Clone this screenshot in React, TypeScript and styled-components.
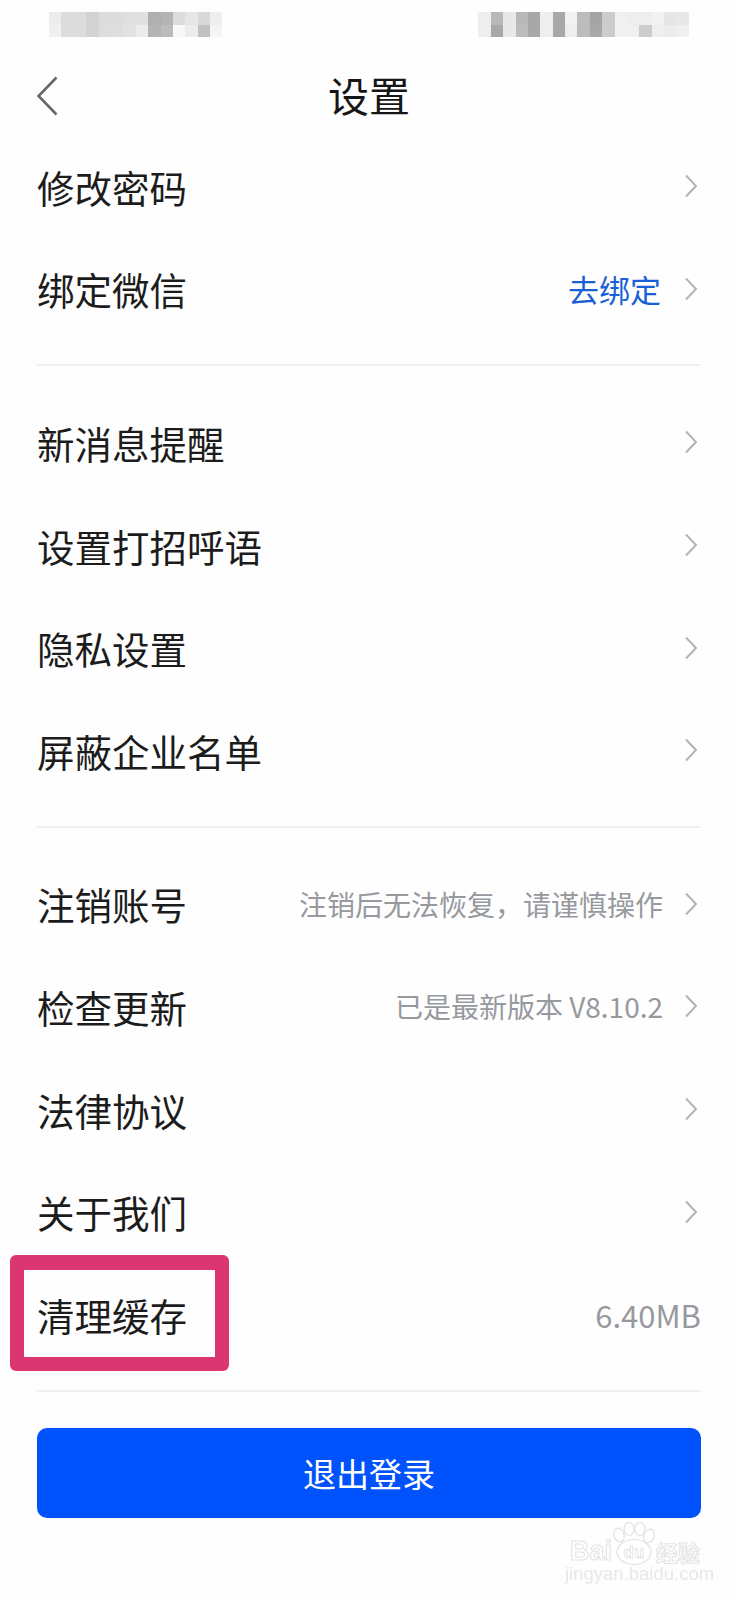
import React from "react";
import styled, { createGlobalStyle } from "styled-components";

const GlobalStyle = createGlobalStyle`
  html, body {
    margin: 0;
    padding: 0;
    background: #fff;
  }
  body {
    font-family: "Noto Sans CJK SC", "Noto Sans", sans-serif;
  }
`;

const Page = styled.div`
  position: relative;
  width: 738px;
  height: 1600px;
  background: #fefefe;
  overflow: hidden;
`;

const StatusBar = styled.div`
  display: flex;
  justify-content: space-between;
  align-items: flex-start;
  height: 44px;
  padding: 12px 49px 0;
`;

const Mosaic = styled.div<{ $cols: number }>`
  display: grid;
  grid-template-columns: repeat(${(p) => p.$cols}, 12.4px);
  grid-auto-rows: 12.5px;
  filter: blur(0.5px);
`;

const MosaicCell = styled.span<{ $shade: string }>`
  background: ${(p) => p.$shade};
`;

const NavBar = styled.header`
  display: grid;
  grid-template-columns: 1fr auto 1fr;
  align-items: center;
  height: 82px;
  padding: 0 37px;
`;

const BackIcon = styled.svg`
  display: block;
  width: 22px;
  height: 40px;
  margin-top: -2px;
`;

const Title = styled.h1`
  margin: 0;
  padding-bottom: 6px;
  font-size: 41px;
  line-height: 76px;
  font-weight: 400;
  color: #161616;
`;

const List = styled.main`
  padding: 0 37px;
`;

const Row = styled.div`
  position: relative;
  box-sizing: border-box;
  display: flex;
  justify-content: space-between;
  align-items: center;
  height: 102.6px;
  padding-bottom: 6px;
`;

const Label = styled.span`
  font-size: 37.5px;
  color: #1c1c1c;
`;

const Right = styled.div`
  display: flex;
  align-items: center;
`;

const Hint = styled.span<{ $tone?: "blue" | "gray"; $size?: number }>`
  font-size: ${(p) => p.$size ?? 28}px;
  color: ${(p) => (p.$tone === "blue" ? "#1a5fd6" : "#96999e")};
  margin-right: ${(p) => (p.$tone === "blue" ? 2 : 0)}px;
`;

const ChevronIcon = styled.svg`
  display: block;
  width: 14px;
  height: 24px;
  margin: 0 3px 0 21px;
`;

const Divider = styled.hr<{ $after?: number }>`
  height: 2px;
  margin: 21px 0 ${(p) => p.$after ?? 28}px;
  border: 0;
  background: #f0f0f0;
`;

const Highlight = styled.div`
  position: absolute;
  top: -11px;
  left: -27px;
  width: 191px;
  height: 87px;
  border: solid #dc3672;
  border-width: 15px 14px 14px;
  border-radius: 6px;
`;

const LogoutButton = styled.button`
  display: block;
  width: 100%;
  height: 90px;
  padding: 0;
  border: 0;
  border-radius: 10px;
  background: #0052fc;
  color: #fff;
  font-family: inherit;
  font-size: 33px;
`;

const Watermark = styled.div`
  position: absolute;
  left: 570px;
  top: 1525px;
  width: 140px;
  color: #e8e8e8;
  font-family: "Liberation Sans", sans-serif;
  filter: blur(0.4px);
`;

const WatermarkTop = styled.div`
  display: flex;
  align-items: flex-end;
  height: 40px;
`;

const WatermarkWord = styled.span`
  flex: none;
  font-size: 27px;
  line-height: 28px;
  font-weight: 700;
  color: #fff;
  -webkit-text-stroke: 1px #e2e2e2;
`;

const WatermarkCn = styled.span`
  flex: none;
  font-family: "Noto Sans CJK SC", sans-serif;
  font-size: 22px;
  line-height: 28px;
  font-weight: 700;
  white-space: nowrap;
  color: #fff;
  -webkit-text-stroke: 1px #e2e2e2;
`;

const Paw = styled.svg`
  display: block;
  flex: none;
  width: 44px;
  height: 44px;
  margin: 0 0 -1px 0;
`;

const WatermarkUrl = styled.div`
  margin: -1px 0 0 -5px;
  font-size: 18.5px;
  line-height: 20px;
  white-space: nowrap;
`;

const statusLeft = [
  "#ececec,#dcdcdc,#dcdcdc,#d2d2d2,#dcdcdc,#dcdcdc,#dfdfdf,#e0e0e0,#b0b0b0,#b4b4b4,#dcdcdc,#e6e6e6,#d8d8d8,#eeeeee",
  "#f0f0f0,#dcdcdc,#dcdcdc,#d2d2d2,#dddddd,#dedede,#e2e2e2,#ececec,#b4b4b4,#bbbbbb,#f8f8f8,#ececec,#c0c0c0,#f4f4f4",
].join(",").split(",");

const statusRight = [
  "#eeeeee,#b8b8b8,#e8e8e8,#b8b8b8,#a8a8a8,#eeeeee,#a8a8a8,#f2f2f2,#bcbcbc,#a4a4a4,#cccccc,#f0f0f0,#eeeeee,#eeeeee,#f2f2f2,#e6e6e6,#e8e8e8",
  "#eeeeee,#a8a8a8,#e8e8e8,#bcbcbc,#a8a8a8,#eeeeee,#a8a8a8,#eeeeee,#bcbcbc,#a8a8a8,#cccccc,#f0f0f0,#f0f0f0,#cccccc,#eeeeee,#ececec,#f0f0f0",
].join(",").split(",");

function Chevron() {
  return (
    <ChevronIcon viewBox="0 0 14 24">
      <path d="M2 1.5 L12 12 L2 22.5" fill="none" stroke="#b1b5b9" strokeWidth="2" />
    </ChevronIcon>
  );
}

type Item = { label: string; hint?: string; tone?: "blue" | "gray"; size?: number; arrow?: boolean };

const group1: Item[] = [
  { label: "修改密码", arrow: true },
  { label: "绑定微信", hint: "去绑定", tone: "blue", size: 31, arrow: true },
];

const group2: Item[] = [
  { label: "新消息提醒", arrow: true },
  { label: "设置打招呼语", arrow: true },
  { label: "隐私设置", arrow: true },
  { label: "屏蔽企业名单", arrow: true },
];

const group3: Item[] = [
  { label: "注销账号", hint: "注销后无法恢复，请谨慎操作", arrow: true },
  { label: "检查更新", hint: "已是最新版本 V8.10.2", arrow: true },
  { label: "法律协议", arrow: true },
  { label: "关于我们", arrow: true },
];

function SettingRow({ label, hint, tone, size, arrow }: Item) {
  return (
    <Row>
      <Label>{label}</Label>
      <Right>
        {hint && <Hint $tone={tone} $size={size}>{hint}</Hint>}
        {arrow && <Chevron />}
      </Right>
    </Row>
  );
}

export default function App() {
  return (
    <Page>
      <GlobalStyle />
      <StatusBar>
        <Mosaic $cols={14}>
          {statusLeft.map((shade, i) => <MosaicCell key={i} $shade={shade} />)}
        </Mosaic>
        <Mosaic $cols={17}>
          {statusRight.map((shade, i) => <MosaicCell key={i} $shade={shade} />)}
        </Mosaic>
      </StatusBar>
      <NavBar>
        <BackIcon viewBox="0 0 22 40">
          <path d="M19.5 1.5 L1.5 20 L19.5 38.5" fill="none" stroke="#67676b" strokeWidth="2.6" />
        </BackIcon>
        <Title>设置</Title>
      </NavBar>
      <List>
        {group1.map((item) => <SettingRow key={item.label} {...item} />)}
        <Divider />
        {group2.map((item) => <SettingRow key={item.label} {...item} />)}
        <Divider />
        {group3.map((item) => <SettingRow key={item.label} {...item} />)}
        <Row>
          <Label>清理缓存</Label>
          <Right>
            <Hint $size={31}>6.40MB</Hint>
          </Right>
          <Highlight />
        </Row>
        <Divider $after={36} />
        <LogoutButton>退出登录</LogoutButton>
      </List>
      <Watermark>
        <WatermarkTop>
          <WatermarkWord>Bai</WatermarkWord>
          <Paw viewBox="0 0 44 44">
            <g fill="#fff" stroke="#e2e2e2" strokeWidth="1.2">
              <ellipse cx="7" cy="13" rx="5" ry="7" transform="rotate(-20 7 13)" />
              <ellipse cx="17" cy="7" rx="5" ry="6.5" />
              <ellipse cx="28" cy="7" rx="5" ry="6.5" />
              <ellipse cx="37" cy="14" rx="5" ry="7" transform="rotate(20 37 14)" />
              <ellipse cx="22" cy="30" rx="17" ry="12.5" />
            </g>
            <text x="22" y="36" textAnchor="middle" fontFamily="Liberation Sans, sans-serif" fontSize="17" fontWeight="700" fill="#fff" stroke="#e2e2e2" strokeWidth="0.8">du</text>
          </Paw>
          <WatermarkCn>经验</WatermarkCn>
        </WatermarkTop>
        <WatermarkUrl>jingyan.baidu.com</WatermarkUrl>
      </Watermark>
    </Page>
  );
}
